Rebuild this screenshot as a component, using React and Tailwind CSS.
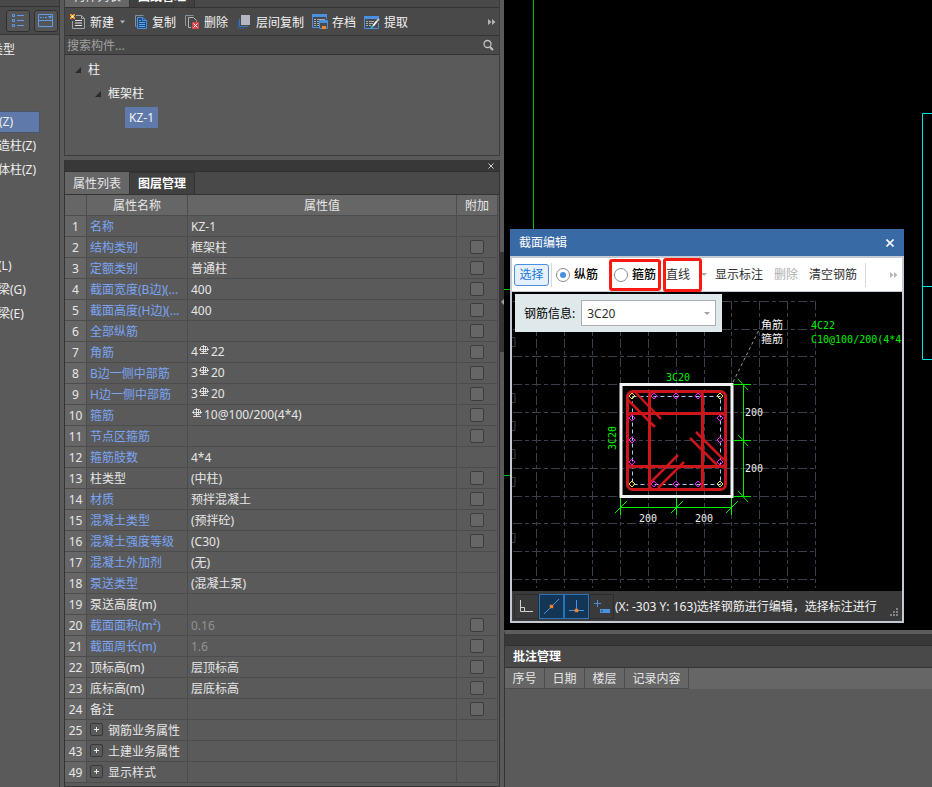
import React, { useState } from "react";

const componentTypes = ["柱(Z)", "构造柱(Z)", "砌体柱(Z)"];
const beamTypes = ["梁(L)", "连梁(G)", "圈梁(E)"];

// blue = common property, plain = private, group = collapsed section
const properties = [
  { no: 1, name: "名称", value: "KZ-1", blue: true },
  { no: 2, name: "结构类别", value: "框架柱", blue: true, check: true },
  { no: 3, name: "定额类别", value: "普通柱", blue: true, check: true },
  { no: 4, name: "截面宽度(B边)(...", value: "400", blue: true, check: true },
  { no: 5, name: "截面高度(H边)(...", value: "400", blue: true, check: true },
  { no: 6, name: "全部纵筋", value: "", blue: true, check: true },
  { no: 7, name: "角筋", rebar: ["4", "22"], blue: true, check: true },
  { no: 8, name: "B边一侧中部筋", rebar: ["3", "20"], blue: true, check: true },
  { no: 9, name: "H边一侧中部筋", rebar: ["3", "20"], blue: true, check: true },
  { no: 10, name: "箍筋", rebar: ["", "10@100/200(4*4)"], blue: true, check: true },
  { no: 11, name: "节点区箍筋", value: "", blue: true, check: true },
  { no: 12, name: "箍筋肢数", value: "4*4", blue: true },
  { no: 13, name: "柱类型", value: "(中柱)", check: true },
  { no: 14, name: "材质", value: "预拌混凝土", blue: true, check: true },
  { no: 15, name: "混凝土类型", value: "(预拌砼)", blue: true, check: true },
  { no: 16, name: "混凝土强度等级", value: "(C30)", blue: true, check: true },
  { no: 17, name: "混凝土外加剂", value: "(无)", blue: true },
  { no: 18, name: "泵送类型", value: "(混凝土泵)", blue: true },
  { no: 19, name: "泵送高度(m)", value: "" },
  { no: 20, name: "截面面积(m²)", value: "0.16", blue: true, muted: true, check: true },
  { no: 21, name: "截面周长(m)", value: "1.6", blue: true, muted: true, check: true },
  { no: 22, name: "顶标高(m)", value: "层顶标高", check: true },
  { no: 23, name: "底标高(m)", value: "层底标高", check: true },
  { no: 24, name: "备注", value: "", check: true },
  { no: 25, name: "钢筋业务属性", value: "", group: true },
  { no: 43, name: "土建业务属性", value: "", group: true },
  { no: 49, name: "显示样式", value: "", group: true },
];

function RebarMark() {
  return (
    <svg width="10" height="10" viewBox="0 0 10 10" className="mb-1 ml-px mr-0.5" fill="none" stroke="#e8e8e8">
      <path d="M2.500 1.500h5l1 1v3l-1 1h-5l-1-1v-3z" strokeWidth="0.900" />
      <path d="M4.500 0v9M6.500 1v6M0 4.500h10M1 8.500h8" strokeWidth="0.900" />
    </svg>
  );
}

function MoreIcon() {
  return (
    <svg width="8" height="6" viewBox="0 0 8 6" fill="#b5b5b5">
      <path d="M0 0l3.5 3L0 6zM4 0l3.5 3L4 6z" />
    </svg>
  );
}

function NewIcon() {
  return (
    <svg width="16" height="16" viewBox="0 0 16 16" fill="none">
      <path d="M6 1.500h5.500l3 3v10h-12V7" stroke="#9aa5ab" />
      <path d="M11.500 1.500v3h3" stroke="#9aa5ab" />
      <path d="M5 6.500h7M5 9h7M5 11.500h7" stroke="#e0e0e0" />
      <path d="M0 0h2v1h1V0h2v2H4v1h1v2H3V4H2v1H0V3h1V2H0z" fill="#f09a30" />
      <path d="M2 1h1v1h1v1H3v1H2V3H1V2h1z" fill="#ffe9a0" />
    </svg>
  );
}

function CopyIcon() {
  return (
    <svg width="14" height="16" viewBox="0 0 14 16" fill="none">
      <path d="M2.500 12.500H1.500V1.500h8" stroke="#7e929e" />
      <path d="M3.500 3.500h5l4 3v8h-9z" stroke="#4a90e2" fill="#1d4c80" />
      <path d="M8.500 3.500v3h4" stroke="#4a90e2" />
      <path d="M5 8.500h6M5 10.500h6M5 12.500h6M5 6.500h2" stroke="#62a4f0" />
    </svg>
  );
}

function DeleteIcon() {
  return (
    <svg width="16" height="16" viewBox="0 0 16 16" fill="none">
      <path d="M2.500 11.500h-1v-10h8" stroke="#87929a" />
      <path d="M7 13.500H4.500v-10h5l3 3v1" stroke="#b0b5b8" />
      <path d="M8 8h7v7H8z" fill="#d9434b" />
      <path d="M9.500 9.500l4 4M13.500 9.500l-4 4" stroke="#fff" />
    </svg>
  );
}

function LayerIcon() {
  return (
    <svg width="16" height="16" viewBox="0 0 16 16" fill="none">
      <path d="M5 1h9v10H5z" fill="#b4b6c2" />
      <path d="M3.500 5v7.500H12" stroke="#3a77b5" />
      <path d="M2 7v7.500h6" stroke="#2d6196" />
    </svg>
  );
}

function ArchiveIcon() {
  return (
    <svg width="16" height="16" viewBox="0 0 16 16" fill="none">
      <path d="M.5 1v12.500h7M14.500 5V1" stroke="#4a90e2" />
      <path d="M0 0h15v3H0z" fill="#4a90e2" />
      <path d="M2 5.500h2M5 5.500h8M2 7.500h2M5 7.500h2M2 9.500h2M5 9.500h2M2 11.500h2M5 11.500h2" stroke="#a5aeb5" />
      <path d="M7.500 6.500h8v8h-8z" fill="#4b4b4b" stroke="#4a90e2" />
      <path d="M8 6h7v3H8z" fill="#4a90e2" />
      <path d="M10 12h4v3h-4z" fill="#f08a2c" />
    </svg>
  );
}

function ExtractIcon() {
  return (
    <svg width="16" height="16" viewBox="0 0 16 16" fill="none">
      <path d="M.5 2v12.500h14V9" stroke="#4a90e2" />
      <path d="M0 2h15v3H0z" fill="#4a90e2" />
      <path d="M2 7.500h2M5 7.500h5M2 9.500h2M5 9.500h4M2 11.500h2M5 11.500h2" stroke="#a5aeb5" />
      <path d="M9 12l4-5" stroke="#f4f4f4" strokeWidth="2" />
      <path d="M13 7l2-2" stroke="#c9c9c9" strokeWidth="2" />
      <path d="M7 14l2-2" stroke="#22b8c4" strokeWidth="2" />
    </svg>
  );
}

const tools = [
  { label: "新建", icon: <NewIcon />, arrow: true },
  { label: "复制", icon: <CopyIcon /> },
  { label: "删除", icon: <DeleteIcon /> },
  { label: "层间复制", icon: <LayerIcon /> },
  { label: "存档", icon: <ArchiveIcon /> },
  { label: "提取", icon: <ExtractIcon /> },
];

function Tabs({ first, second }) {
  return (
    <div className="flex h-[23px] shrink-0 bg-[#494949] border-b border-[#333333]" role="tablist">
      <button type="button" role="tab" aria-selected="true" className="w-16 pt-0.5 bg-[#666666]">
        {first}
      </button>
      <button
        type="button"
        role="tab"
        aria-selected="false"
        className="w-[66px] bg-[#404040] border-x border-t border-[#333333] font-bold text-white"
      >
        {second}
      </button>
    </div>
  );
}

function TypeSidebar() {
  return (
    <aside className="w-[60px] shrink-0 overflow-hidden border-r border-[#383838] whitespace-nowrap text-[#eeeeee]">
      <div className="h-[7px] bg-[#494949] border-b border-[#333333]" />
      <div className="flex h-7 items-center gap-1 pl-1.5 bg-[#494949] border-b border-[#383838]">
        <button
          type="button"
          aria-label="列表"
          className="flex h-[22px] w-6 shrink-0 items-center justify-center rounded-[3px] border border-[#303030] bg-[#555555]"
        >
          <svg width="14" height="14" viewBox="0 0 14 14" fill="none" stroke="#5a9cf0">
            <path d="M1.500 .5h2v2h-2zM1.500 5.500h2v2h-2zM1.500 10.500h2v2h-2zM6 1.500h7M6 6.500h7M6 11.500h7" />
          </svg>
        </button>
        <button
          type="button"
          aria-label="窗口"
          className="flex h-[22px] w-6 shrink-0 items-center justify-center rounded-[3px] border border-[#303030] bg-[#555555]"
        >
          <svg width="16" height="14" viewBox="0 0 16 14" fill="none" stroke="#5a9cf0">
            <path d="M.5 .5h14v12h-14zM.5 6.500h14M2 3.500h2M5 3.500h1M7 3.500h2" />
            <path d="M10 2h4l-2 3z" fill="#5a9cf0" stroke="none" />
          </svg>
        </button>
      </div>
      <div className="-ml-[9px] pt-[3px] leading-6">类型</div>
      <ul className="-ml-3.5 mt-12 leading-6">
        {componentTypes.map((item, i) => (
          <li key={item} className="h-6 py-px">
            <div
              className={
                i === 0
                  ? "w-[54px] border border-[#4a5568] bg-[#5f7aaa] leading-5"
                  : "leading-[22px]"
              }
            >
              {item}
            </div>
          </li>
        ))}
      </ul>
      <ul className="-ml-3.5 mt-[72px] leading-6">
        {beamTypes.map((item) => (
          <li key={item}>{item}</li>
        ))}
      </ul>
    </aside>
  );
}

function ComponentPanel() {
  return (
    <section className="-mt-[15px] flex h-[171px] shrink-0 flex-col border border-t-0 border-[#3c3c3c]">
      <Tabs first="构件列表" second="图纸管理" />
      <div className="flex h-7 shrink-0 items-center gap-2 border-b border-[#333333] bg-[#494949] pl-[5px] pr-[3px] text-[#f2f2f2]">
        {tools.map((tool) => (
          <button key={tool.label} type="button" className="flex shrink-0 items-center gap-1">
            {tool.icon}
            <span className="pt-0.5">{tool.label}</span>
            {tool.arrow && (
              <svg width="8" height="4" viewBox="0 0 8 4" fill="#b5b5b5">
                <path d="M2 0.500h5L4.500 3.500z" />
              </svg>
            )}
          </button>
        ))}
        <button type="button" aria-label="更多" className="ml-auto">
          <MoreIcon />
        </button>
      </div>
      <div className="flex h-[19px] shrink-0 items-center border-b border-[#333333] bg-[#494949] pl-0.5 pr-[5px]">
        <input
          type="text"
          aria-label="搜索构件"
          placeholder="搜索构件..."
          className="min-w-0 flex-1 bg-transparent pt-0.5 outline-none placeholder:text-[#a0a0a0]"
        />
        <svg width="12" height="12" viewBox="0 0 12 12" fill="none" stroke="#c4c4c4">
          <circle cx="5.500" cy="5" r="3.500" strokeWidth="1.300" />
          <path d="M8 8l3 3" strokeWidth="2" />
        </svg>
      </div>
      <ul className="pt-[3px] pl-2.5 leading-6 text-[#f2f2f2]">
        <li>
          <div className="flex items-center gap-[7px]">
            <Caret />柱
          </div>
          <ul className="pl-5">
            <li>
              <div className="flex items-center gap-[7px]">
                <Caret />框架柱
              </div>
              <button type="button" className="ml-[30px] mt-px block h-[21px] bg-[#5f7aaa] px-1 leading-5">
                KZ-1
              </button>
            </li>
          </ul>
        </li>
      </ul>
    </section>
  );
}

function Caret() {
  return (
    <svg width="6" height="6" viewBox="0 0 6 6" fill="#2a2a2a">
      <path d="M6 0v6H0z" />
    </svg>
  );
}

function PropertyRow({ row, checked, onToggle }) {
  return (
    <tr className="h-[21px]">
      <td className="border-b border-r border-[#4c4c4c] bg-[#666666] pt-0.5 text-center">{row.no}</td>
      <td
        className={
          row.blue
            ? "whitespace-nowrap border-b border-r border-[#4c4c4c] pt-0.5 pl-[3px] text-[#7aa5f5]"
            : "whitespace-nowrap border-b border-r border-[#4c4c4c] pt-0.5 pl-[3px]"
        }
      >
        {row.group ? (
          <div className="flex items-center gap-[5px]">
            <button
              type="button"
              aria-label="展开"
              className="mb-1 flex h-[13px] w-[13px] items-center justify-center rounded-[2px] border border-[#383838]"
            >
              <svg width="5" height="5" viewBox="0 0 5 5" stroke="#e8e8e8">
                <path d="M0 2.500h5M2.500 0v5" />
              </svg>
            </button>
            {row.name}
          </div>
        ) : (
          row.name
        )}
      </td>
      <td
        className={
          row.muted
            ? "border-b border-r border-[#4c4c4c] pt-0.5 pl-[3px] text-[#929292]"
            : row.rebar
              ? "border-b border-r border-[#4c4c4c] pl-[3px]"
              : "border-b border-r border-[#4c4c4c] pt-0.5 pl-[3px]"
        }
      >
        {row.rebar ? (
          <div className="flex items-center">
            {row.rebar[0]}
            <RebarMark />
            {row.rebar[1]}
          </div>
        ) : (
          row.value
        )}
      </td>
      <td className="border-b border-r border-[#4c4c4c]">
        {row.check && (
          <input
            type="checkbox"
            aria-label={row.name + "附加"}
            checked={checked}
            onChange={onToggle}
            className="mx-auto block h-3.5 w-3.5 appearance-none rounded-[2px] border border-[#3c3c3c] bg-[#666666] checked:bg-[#5f7aaa]"
          />
        )}
      </td>
    </tr>
  );
}

function PropertyPanel() {
  const [checked, setChecked] = useState({});

  const toggle = (no) => {
    setChecked({ ...checked, [no]: !checked[no] });
  };

  return (
    <section className="mt-1 flex flex-1 flex-col border border-t-0 border-[#333333]">
      <div className="flex h-3 shrink-0 items-center justify-end border-b border-[#303030] bg-[#383838] pr-[5px]">
        <button type="button" aria-label="关闭">
          <svg width="6" height="6" viewBox="0 0 6 6" stroke="#d0d0d0">
            <path d="M.5 .5l5 5M5.500 .5l-5 5" />
          </svg>
        </button>
      </div>
      <Tabs first="属性列表" second="图层管理" />
      <div className="pr-px pb-[3px]">
        <table className="w-full table-fixed border-separate border-spacing-0 text-[#e6e6e6]">
          <colgroup>
            <col className="w-[22px]" />
            <col className="w-[101px]" />
            <col />
            <col className="w-[41px]" />
          </colgroup>
          <thead>
            <tr className="h-[21px] bg-[#666666]">
              <th className="border-b border-r border-[#4c4c4c]" aria-label="序号" />
              <th className="border-b border-r border-[#4c4c4c] pt-0.5 font-normal">属性名称</th>
              <th className="border-b border-r border-[#4c4c4c] pt-0.5 font-normal">属性值</th>
              <th className="border-b border-r border-[#4c4c4c] pt-0.5 font-normal">附加</th>
            </tr>
          </thead>
          <tbody>
            {properties.map((row) => (
              <PropertyRow
                key={row.no}
                row={row}
                checked={!!checked[row.no]}
                onToggle={() => toggle(row.no)}
              />
            ))}
          </tbody>
        </table>
      </div>
    </section>
  );
}

const gridX = [536.5, 564.5, 592.5, 620.5, 648.5, 676.5, 704.5, 731.5, 759.5, 787.5, 815.5];
const gridY = [301.5, 329.5, 356.5, 384.5, 412.5, 440.5, 468.5, 496.5, 523.5, 551.5, 579.5];

const midBars = [
  [654, 396], [676, 396], [698, 396],
  [654, 484], [676, 484], [698, 484],
  [632, 418], [632, 440], [632, 462],
  [720, 418], [720, 440], [720, 462],
];
const cornerBars = [[632, 396], [720, 396], [632, 484], [720, 484]];

function SectionDrawing() {
  return (
    <svg
      width="390"
      height="299"
      viewBox="512 292 390 299"
      fill="none"
      className="block font-['DejaVu_Sans_Mono','Noto_Sans_CJK_SC',monospace] text-[10px]"
    >
      <g stroke="#3a3f4c" strokeDasharray="9 3 4 3">
        {gridX.map((x) => (
          <path key={x} d={`M${x} 301V588`} />
        ))}
        {gridY.map((y) => (
          <path key={y} d={`M513 ${y}H816`} />
        ))}
      </g>
      <path d="M512 337.500h3v9h-3M512 393.500h3v9h-3M512 421.500h3v9h-3M512 449.500h3v9h-3M512 477.500h3v9h-3M512 533.500h3v9h-3" stroke="#3a3f4c" />

      {/* leader line to the labels */}
      <path d="M733 382L760 328" stroke="#a0a0a0" strokeDasharray="3 3" />

      <rect x="621" y="384.500" width="111" height="112" stroke="#f2f2f4" strokeWidth="3" />

      <rect x="632.500" y="396.500" width="88" height="88" stroke="#a5c8f5" strokeDasharray="4 3" />

      {/* stirrups */}
      <g stroke="#cc161c" strokeWidth="3">
        <rect x="627.500" y="391.500" width="98" height="98" rx="5" />
        <rect x="649.500" y="391.500" width="53" height="98" rx="4" />
        <rect x="627.500" y="413.500" width="98" height="53" rx="4" />
        <path d="M628 400L655 427M635 392L661 419" strokeWidth="2.500" />
        <path d="M690 438L717 465M696 432L724 460" strokeWidth="2.500" />
        <path d="M651 482L678 455M658 488L684 462" strokeWidth="2.500" />
      </g>

      <g stroke="#f018f0">
        {midBars.map(([x, y]) => (
          <path key={`${x}-${y}`} d={`M${x} ${y - 3}l3 3l-3 3l-3 -3z`} />
        ))}
      </g>
      <g stroke="#f0e040">
        {cornerBars.map(([x, y]) => (
          <path key={`${x}-${y}`} d={`M${x} ${y - 3}l3 3l-3 3l-3 -3z`} />
        ))}
      </g>

      {/* dimension lines */}
      <g stroke="#00f000">
        <path d="M743.500 384V496M733 384.500h18M733 440.500h18M733 496.500h18M738 379l10 11M738 435l10 11M738 491l10 11" />
        <path d="M620 507.500H732M620.500 498v17M676.500 498v17M731.500 498v17M615 513l12-12M671 513l12-12M726 513l12-12" />
      </g>

      <g fill="#f0f0f0">
        <text x="745" y="416">200</text>
        <text x="745" y="472">200</text>
        <text x="639" y="522">200</text>
        <text x="695" y="522">200</text>
        <text x="761" y="329" fontSize="11">角筋</text>
        <text x="761" y="343" fontSize="11">箍筋</text>
      </g>
      <g fill="#00f000">
        <text x="666" y="381">3C20</text>
        <text x="616" y="450" transform="rotate(-90 616 450)">3C20</text>
        <text x="811" y="329">4C22</text>
        <text x="811" y="343">C10@100/200(4*4</text>
      </g>
    </svg>
  );
}

function StatusBar() {
  return (
    <div className="flex h-[30px] items-center overflow-hidden whitespace-nowrap bg-[#3a3a3a] pl-0.5 text-[#f0f0f0]">
      <button type="button" aria-label="正交" className="flex h-[25px] w-[25px] shrink-0 items-center justify-center border border-[#2c2c2c]">
        <svg width="15" height="15" viewBox="0 0 15 15" fill="none" stroke="#d0d0d0">
          <path d="M1.500 1v11.500H14M1.500 8.500h4v4" />
        </svg>
      </button>
      <button type="button" aria-label="最近点" className="flex h-[25px] w-[25px] shrink-0 items-center justify-center border border-[#2a72bc] bg-[#133556]">
        <svg width="17" height="17" viewBox="0 0 17 17" fill="none" stroke="#4a90e2">
          <path d="M1 16L16 1" />
          <path d="M7 7h3v3H7z" fill="#f08a2c" stroke="#f0702c" strokeWidth="0.500" />
        </svg>
      </button>
      <button type="button" aria-label="垂足" className="flex h-[25px] w-[25px] shrink-0 items-center justify-center border border-[#2a72bc] bg-[#133556]">
        <svg width="17" height="17" viewBox="0 0 17 17" fill="none" stroke="#4a90e2">
          <path d="M8.500 2v11M1 12.500h15" />
          <path d="M7 11h3v3H7z" fill="#f08a2c" stroke="#f0702c" strokeWidth="0.500" />
        </svg>
      </button>
      <button type="button" aria-label="动态输入" className="flex h-[25px] w-[25px] shrink-0 items-center justify-center border border-[#2c2c2c]">
        <svg width="17" height="17" viewBox="0 0 17 17" fill="none" stroke="#4a90e2">
          <path d="M4.500 2v7M1 5.500h7" />
          <path d="M7 11h10v4H7z" fill="#4a90e2" stroke="none" />
          <path d="M9 12v2" stroke="#3a3a3a" />
        </svg>
      </button>
      <span className="pt-0.5 pl-px">(X: -303 Y: 163)选择钢筋进行编辑，选择标注进行</span>
      <svg width="8" height="8" viewBox="0 0 8 8" fill="#808488" className="ml-auto mr-1 mt-3 shrink-0">
        <path d="M6 0h2v2H6zM3 3h2v2H3zM6 3h2v2H6zM0 6h2v2H0zM3 6h2v2H3zM6 6h2v2H6z" />
      </svg>
    </div>
  );
}

function RadioItem({ label, value, mode, setMode }) {
  return (
    <label className="flex items-center gap-1 font-medium text-black">
      <input
        type="radio"
        name="mode"
        checked={mode === value}
        onChange={() => setMode(value)}
        className="h-3.5 w-3.5 appearance-none rounded-full border border-[#8a8a8a] bg-white bg-clip-content p-[3px] checked:bg-[#4a90e2]"
      />
      {label}
    </label>
  );
}

function SectionEditor() {
  const [mode, setMode] = useState("long");

  return (
    <div className="absolute left-[6px] top-[229px] w-[394px] text-[#303030]">
      <div className="flex h-[27px] items-center justify-between bg-[#386aa6] pl-[9px] pr-2.5 text-white">
        <h2>截面编辑</h2>
        <button type="button" aria-label="关闭">
          <svg width="8" height="8" viewBox="0 0 8 8" stroke="#ffffff" strokeWidth="1.600">
            <path d="M.5 .5l7 7M7.500 .5l-7 7" />
          </svg>
        </button>
      </div>
      <div className="border-2 border-[#c4cad4]">
        <div className="flex h-[34px] items-center border-b border-[#c4cad4] bg-white pl-0.5 pr-1">
          <button type="button" className="h-[22px] w-[35px] rounded-[3px] border border-[#4a90e2] bg-[#e5f0fb] text-[#1a78d8]">
            选择
          </button>
          <span className="ml-0.5 h-6 w-px bg-[#d8d8d8]" />
          <div className="ml-1">
            <RadioItem label="纵筋" value="long" mode={mode} setMode={setMode} />
          </div>
          <div className="relative ml-4">
            <RadioItem label="箍筋" value="stirrup" mode={mode} setMode={setMode} />
            <span className="pointer-events-none absolute -inset-x-[5px] -inset-y-[7px] rounded-[3px] border-3 border-[#fb1a12]" />
          </div>
          <div className="relative ml-2.5 flex items-center">
            <button type="button">直线</button>
            <svg width="6" height="3" viewBox="0 0 6 3" fill="#aaaaaa" className="ml-[11px]">
              <path d="M0 0h6L3 3z" />
            </svg>
            <span className="pointer-events-none absolute -left-[3px] -inset-y-2 w-[39px] rounded-[3px] border-3 border-[#fb1a12]" />
          </div>
          <button type="button" className="ml-2">显示标注</button>
          <button type="button" disabled className="ml-[11px] text-[#b0b0b0]">删除</button>
          <button type="button" className="ml-[11px]">清空钢筋</button>
          <span className="ml-2 h-6 w-px bg-[#d8d8d8]" />
          <button type="button" aria-label="更多" className="ml-auto">
            <MoreIcon />
          </button>
        </div>
        <div className="relative bg-black">
          <SectionDrawing />
          <div className="absolute left-[3px] top-0.5 flex h-[38px] items-center gap-1.5 bg-[#dfe8ea] pl-[9px] pr-1.5 text-black">
            <label htmlFor="rebar-info" className="pt-0.5">钢筋信息:</label>
            <div className="relative flex items-center">
              <select
                id="rebar-info"
                className="h-[26px] w-[135px] appearance-none border border-[#adadad] bg-white pl-[5px] pt-0.5 text-[#303030]"
              >
                <option>3C20</option>
              </select>
              <svg width="6" height="3" viewBox="0 0 6 3" fill="#a0a0a0" className="pointer-events-none absolute right-1.5">
                <path d="M0 0h6L3 3z" />
              </svg>
            </div>
          </div>
        </div>
        <StatusBar />
      </div>
    </div>
  );
}

function CommentPanel() {
  return (
    <section className="flex-1 border-l border-t-4 border-l-[#333333] border-t-[#5c5c5c]">
      <div className="h-3 border-b border-[#303030] bg-[#383838]" />
      <h2 className="h-[22px] border-b border-[#333333] bg-[#494949] pl-2 font-bold leading-[21px] text-white">
        批注管理
      </h2>
      <table className="w-full table-fixed border-separate border-spacing-0 text-[#e6e6e6]">
        <thead>
          <tr className="h-[21px] bg-[#666666]">
            <th className="w-10 border-b border-r border-[#4c4c4c] pt-0.5 font-normal">序号</th>
            <th className="w-10 border-b border-r border-[#4c4c4c] pt-0.5 font-normal">日期</th>
            <th className="w-10 border-b border-r border-[#4c4c4c] pt-0.5 font-normal">楼层</th>
            <th className="w-16 border-b border-r border-[#4c4c4c] pt-0.5 font-normal">记录内容</th>
            <th aria-label="空" />
          </tr>
        </thead>
      </table>
    </section>
  );
}

function App() {
  return (
    <div className="flex min-h-screen overflow-hidden bg-[#5a5a5a] font-['Noto_Sans','Noto_Sans_CJK_SC',sans-serif] text-[12px] leading-[18px] text-[#e6e6e6]">
      <TypeSidebar />
      <main className="ml-1 flex w-[436px] shrink-0 flex-col">
        <ComponentPanel />
        <PropertyPanel />
      </main>
      <div className="w-1 shrink-0 pt-[252px]">
        <button type="button" aria-label="收起" className="flex h-[100px] w-1 items-center bg-[#363636]">
          <svg width="4" height="6" viewBox="0 0 4 6" fill="#a0a0a0">
            <path d="M4 0v6L1 3z" />
          </svg>
        </button>
      </div>
      <div className="flex min-w-0 flex-1 flex-col">
        <div className="relative h-[630px] shrink-0 overflow-hidden bg-black">
          <svg width="428" height="630" viewBox="504 0 428 630" fill="none" className="absolute left-0 top-0">
            <path d="M533.500 0V229M504 289.500h6M504 475.500h6" stroke="#00c000" />
            <path d="M932 113.500h-9.500v246H932M922 286.500h10" stroke="#00e5e5" />
          </svg>
          <SectionEditor />
        </div>
        <CommentPanel />
      </div>
    </div>
  );
}

export default App;
